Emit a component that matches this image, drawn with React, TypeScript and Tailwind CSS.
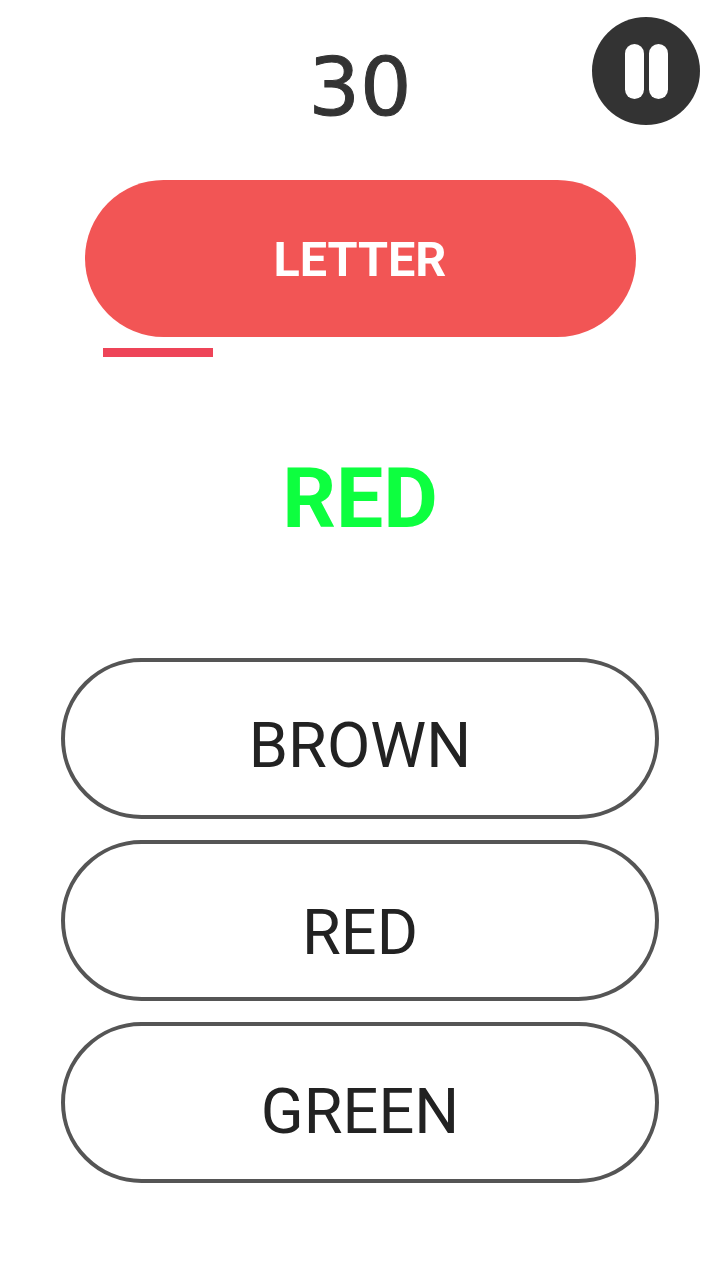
const answers = [
  { label: "BROWN", offset: "pt-[16px]" },
  { label: "RED", offset: "pt-[26px]" },
  { label: "GREEN", offset: "pt-[20px]" },
]

function PauseButton() {
  return (
    <button className="absolute right-[20px] top-[17px] flex h-[108px] w-[108px] items-center justify-center gap-[5px] rounded-full bg-[#333333]">
      <span className="h-[55px] w-[19px] rounded-full bg-white" />
      <span className="h-[55px] w-[19px] rounded-full bg-white" />
    </button>
  )
}

export default function App() {
  return (
    <div className="relative flex h-[1280px] w-[720px] flex-col items-center bg-white font-['Roboto',sans-serif]">
      <PauseButton />

      {/* Countdown */}
      <div className="mt-[39px] h-[96px] text-center font-['DejaVu_Sans',sans-serif] text-[81px] leading-[96px] text-[#333333] [-webkit-text-stroke:1px_#333333]">
        30
      </div>

      {/* Rule to follow, with time bar below it */}
      <div className="mt-[45px] flex h-[157px] w-[551px] items-center justify-center rounded-full bg-[#f25555] pt-[3px] text-[48.5px] font-bold text-white">
        LETTER
      </div>
      <div className="mt-[11px] h-[9px] w-[551px] pl-[18px]">
        <div className="h-full w-[110px] bg-[#ee4458]" />
      </div>

      {/* Word shown in a misleading colour */}
      <div className="mt-[89px] h-[106px] text-[84px] font-bold leading-[106px] text-[#0dff3f]">RED</div>

      {/* Answers */}
      <div className="mt-[106px] flex flex-col gap-[21px]">
        {answers.map((answer) => (
          <button
            key={answer.label}
            className={`flex h-[161px] w-[598px] items-center justify-center rounded-full border-[4px] border-[#555555] text-[63px] text-[#222222] ${answer.offset}`}
          >
            {answer.label}
          </button>
        ))}
      </div>
    </div>
  )
}
